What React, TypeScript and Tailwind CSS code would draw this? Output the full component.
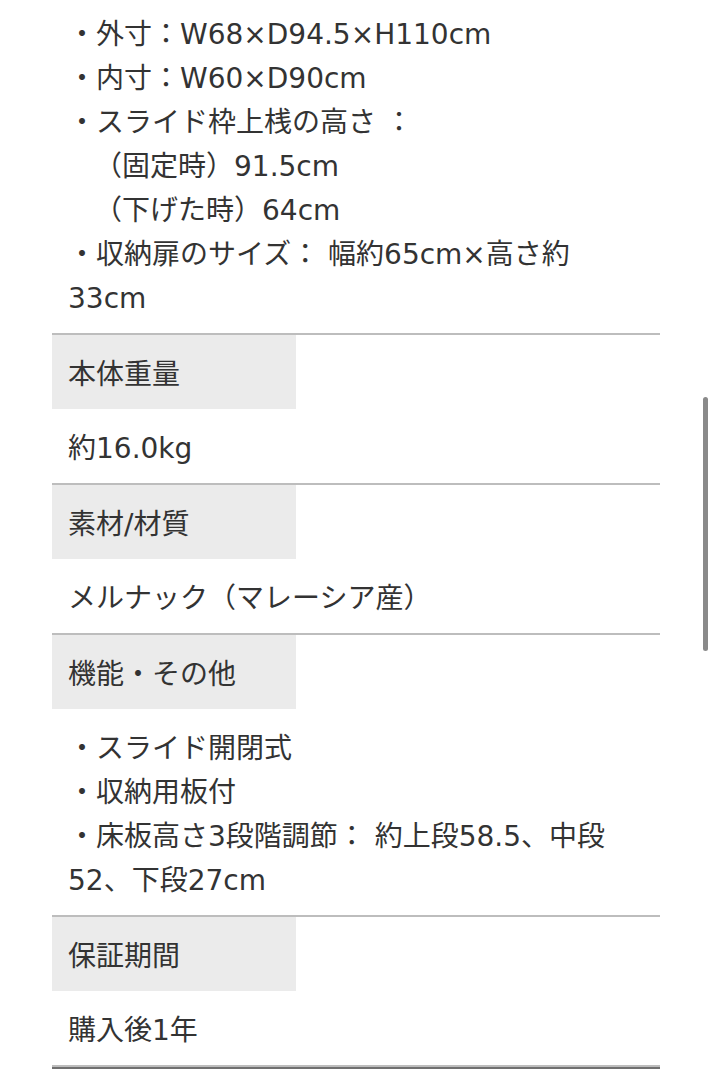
export default function App() {
    const font = { fontFamily: '"DejaVu Sans", "Noto Sans CJK JP", sans-serif' };

    return (
        <div className="relative min-h-[1080px] bg-white text-[#333] overflow-hidden" style={font}>
            <div className="ml-[52px] w-[608px] text-[28px] leading-[44px]">
                {/* Size value (continued from above) */}
                <div className="px-4 pt-[13px] pb-[12px]">
                    <p>・外寸：W68×D94.5×H110cm</p>
                    <p>・内寸：W60×D90cm</p>
                    <p>・スライド枠上桟の高さ ：</p>
                    <p className="pl-[12px]">　（固定時）91.5cm</p>
                    <p className="pl-[12px]">　（下げた時）64cm</p>
                    <p>・収納扉のサイズ： 幅約65cm×高さ約</p>
                    <p>33cm</p>
                </div>

                {/* Weight */}
                <div className="border-t-2 border-[#bdbdbd]">
                    <div className="w-[244px] bg-[#ebebeb] px-4 pt-[18px] pb-[12px]">本体重量</div>
                    <div className="px-4 pt-[18px] pb-[12px]">約16.0kg</div>
                </div>

                {/* Material */}
                <div className="border-t-2 border-[#bdbdbd]">
                    <div className="w-[244px] bg-[#ebebeb] px-4 pt-[18px] pb-[12px]">素材/材質</div>
                    <div className="px-4 pt-[18px] pb-[12px]">メルナック（マレーシア産）</div>
                </div>

                {/* Features */}
                <div className="border-t-2 border-[#bdbdbd]">
                    <div className="w-[244px] bg-[#ebebeb] px-4 pt-[18px] pb-[12px]">機能・その他</div>
                    <div className="px-4 pt-[18px] pb-[12px]">
                        <p>・スライド開閉式</p>
                        <p>・収納用板付</p>
                        <p>・床板高さ3段階調節： 約上段58.5、中段</p>
                        <p>52、下段27cm</p>
                    </div>
                </div>

                {/* Warranty */}
                <div className="border-t-2 border-[#bdbdbd]">
                    <div className="w-[244px] bg-[#ebebeb] px-4 pt-[18px] pb-[12px]">保証期間</div>
                    <div className="px-4 pt-[18px] pb-[12px]">購入後1年</div>
                </div>

                <div className="border-t-2 border-[#bdbdbd] h-[4px] bg-[#707070]" />
            </div>

            {/* scroll indicator */}
            <div className="absolute left-[703px] top-[397px] w-[5px] h-[254px] rounded-full bg-[#8a8a8a]" />
        </div>
    );
}
